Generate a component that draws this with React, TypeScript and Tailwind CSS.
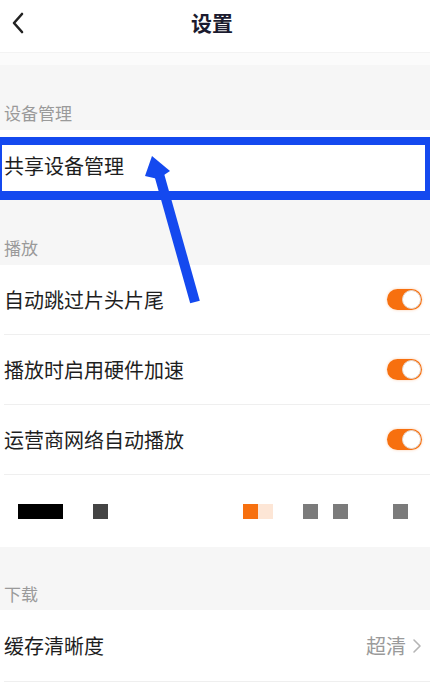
import React from "react";

const Toggle = () => (
  <div className="relative w-[35px] h-[21px] rounded-full bg-[#f7700f] shadow-[0_0_3px_rgba(247,112,15,0.35)]">
    <div className="absolute right-[1px] top-[1px] w-[19px] h-[19px] rounded-full bg-white border border-[#e5d6cc]" />
  </div>
);

const Section = ({ label }: { label: string }) => (
  <div className="h-[65px] bg-[#f6f6f6] flex items-end pb-[7px] pl-[4px]">
    <span className="text-[17px] leading-[20px] text-[#9a9a9a]">{label}</span>
  </div>
);

const ToggleRow = ({ label }: { label: string }) => (
  <div className="h-[70px] ml-[4px] pr-[8px] flex items-center justify-between border-b border-[#efefef]">
    <span className="text-[20px] leading-[24px] text-[#1e1e1e]">{label}</span>
    <Toggle />
  </div>
);

export default function App() {
  return (
    <div
      className="relative w-[430px] h-[688px] overflow-hidden bg-white"
      style={{ fontFamily: '"Noto Sans CJK SC", "Noto Sans", sans-serif' }}
    >
      {/* Header */}
      <div className="relative h-[53px] flex items-center justify-center border-b border-[#f3f3f3]">
        <svg
          className="absolute left-[10px] top-[12px]"
          width="16"
          height="22"
          viewBox="0 0 16 22"
          fill="none"
        >
          <path d="M12 2 L4 11 L12 20" stroke="#222" strokeWidth="2.6" strokeLinecap="round" strokeLinejoin="round" />
        </svg>
        <span className="text-[21px] leading-[26px] font-bold text-[#1b1b2f] pr-[6px] -mt-[9px]">设置</span>
      </div>
      <div className="h-[12px] bg-[#fbfbfb]" />

      <Section label="设备管理" />
      <div className="h-[70px] ml-[4px] flex items-center pt-[2px]">
        <span className="text-[20px] leading-[24px] text-[#1e1e1e]">共享设备管理</span>
      </div>

      <Section label="播放" />
      <ToggleRow label="自动跳过片头片尾" />
      <ToggleRow label="播放时启用硬件加速" />
      <ToggleRow label="运营商网络自动播放" />

      <div className="h-[72px] flex items-center">
        <div className="ml-[18px] w-[45px] h-[15px] bg-black" />
        <div className="ml-[30px] w-[15px] h-[15px] bg-[#444]" />
        <div className="ml-[135px] w-[15px] h-[15px] bg-[#f7700f]" />
        <div className="w-[15px] h-[15px] bg-[#fde6d6]" />
        <div className="ml-[30px] w-[15px] h-[15px] bg-[#7b7b7b]" />
        <div className="ml-[15px] w-[15px] h-[15px] bg-[#7b7b7b]" />
        <div className="ml-[45px] w-[15px] h-[15px] bg-[#7b7b7b]" />
      </div>

      <div className="h-[63px] bg-[#f6f6f6] flex items-end pb-[6px] pl-[4px]">
        <span className="text-[17px] leading-[20px] text-[#9a9a9a]">下载</span>
      </div>
      <div className="h-[72px] ml-[4px] pr-[8px] flex items-center justify-between border-b border-[#efefef]">
        <span className="text-[20px] leading-[24px] text-[#1e1e1e]">缓存清晰度</span>
        <div className="flex items-center gap-[6px]">
          <span className="text-[20px] leading-[24px] text-[#9a9a9a]">超清</span>
          <svg width="10" height="16" viewBox="0 0 10 16" fill="none">
            <path d="M2 2 L8 8 L2 14" stroke="#b5b5b5" strokeWidth="1.6" strokeLinecap="round" strokeLinejoin="round" />
          </svg>
        </div>
      </div>

      {/* Annotation box */}
      <div className="absolute left-0 top-[137px] w-[430px] h-[63px] border-t-[8px] border-b-[9px] border-l-[2px] border-r-[5px] border-[#1449ef]" />

      {/* Annotation arrow */}
      <svg className="absolute left-0 top-0" width="430" height="688" viewBox="0 0 430 688" fill="none">
        <line x1="195" y1="302" x2="159" y2="174" stroke="#1449ef" strokeWidth="10" />
        <polygon points="152,156 170,171 158,179 145,176" fill="#1449ef" />
      </svg>
    </div>
  );
}
